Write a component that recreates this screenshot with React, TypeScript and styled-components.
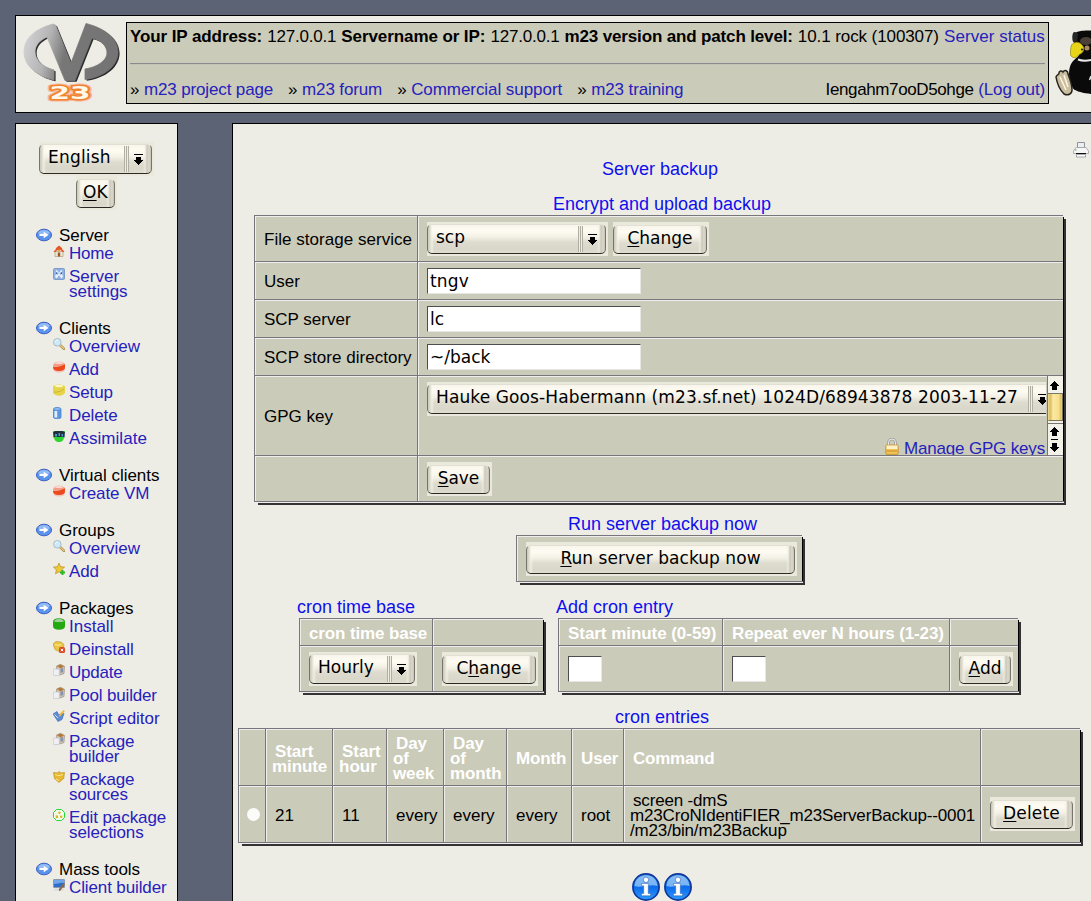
import React from 'react';
import styled, { createGlobalStyle, css } from 'styled-components';

const sans = '"Liberation Sans", Arial, sans-serif';
const ui = '"DejaVu Sans", Verdana, sans-serif';
const page = '#eeede5';
const panel = '#cbcbb9';
const dark = '#76767c';
const light = '#efeeec';
const link = '#2621bd';

const GlobalStyle = createGlobalStyle`
  html, body { margin: 0; padding: 0; background: #5b6374; overflow: hidden; }
  *, *::before, *::after { box-sizing: border-box; }
  body { font: 17px/15px ${sans}; color: #000; }
`;

const Page = styled.div`
  width: 100vw;
  height: 100vh;
  padding: 15px 0 0 15px;
  overflow: hidden;
`;

/* ---------- text ---------- */

const Text = styled.span<{ $track?: number; $bold?: boolean }>`
  white-space: nowrap;
  letter-spacing: ${(p) => p.$track ?? 0}px;
  font-weight: ${(p) => (p.$bold ? 700 : 400)};
`;

const Link = styled.a<{ $track?: number }>`
  color: ${link};
  text-decoration: none;
  letter-spacing: ${(p) => p.$track ?? 0}px;
`;

/* ---------- header ---------- */

const Header = styled.header`
  display: flex;
  width: 1110px;
  height: 98px;
  padding: 6px 0 0 7px;
  border: 1px solid #000;
  background: ${page};
`;

const InfoBox = styled.div`
  width: 923px;
  height: 82px;
  margin: 0 6px 0 6px;
  padding: 4px 3px 0;
  border: 1px solid #000;
  background: ${panel};
`;

const InfoRow = styled.div`
  display: flex;
  justify-content: space-between;
  height: 20px;
  line-height: 20px;
  white-space: nowrap;
`;

const Rule = styled.div`
  height: 2px;
  margin: 16px 0 15px;
  border-top: 1px solid #8b8b8f;
  border-bottom: 1px solid #c3c3b8;
`;

const Links = styled.div`
  display: flex;
  gap: 15px;
`;

const Bullet = styled.span`
  margin-right: 4.5px;
`;

/* ---------- controls ---------- */

const Frame = styled.div<{ $w: number; $kind: 'select' | 'button' }>`
  display: flex;
  flex: none;
  width: ${(p) => p.$w}px;
  height: 34px;
  padding: ${(p) => (p.$kind === 'select' ? 2 : 3)}px 2px 2px 0;
  background: #ebe8dc;
`;

const face = css`
  display: block;
  width: 100%;
  height: 100%;
  margin: 0;
  border: 1px solid #77746b;
  border-top-color: #e2dfd3;
  border-bottom-color: #2a2926;
  border-radius: 5px;
  background:
    linear-gradient(90deg, #c9c6ba 0, #dedbcf 2px, #fbf9ee99 4px, transparent 6px),
    linear-gradient(270deg, #c4c1b5 0, #dcd9cc 2px, #cbc8bb 4px, #f3f1e699 6px, transparent 8px),
    linear-gradient(180deg, #f8f6ec 0, #fefcf2 6px, #f3f1e6 12px, #dedbcf 17px, #d9d6ca 24px, #e0ddd1 100%);
  color: #000;
  font: 17px/24px ${ui};
  white-space: nowrap;
`;

const ButtonFace = styled.button<{ $track?: number }>`
  ${face}
  padding: 0 0 2px;
  line-height: 25px;
  text-align: center;
  letter-spacing: ${(p) => p.$track ?? 0}px;

  u {
    text-decoration-thickness: 1px;
    text-underline-offset: 2px;
    text-decoration-skip-ink: none;
  }
`;

const SelectFace = styled.div<{ $track?: number }>`
  ${face}
  display: flex;
  justify-content: space-between;
  padding: 0 8px;
  letter-spacing: ${(p) => p.$track ?? 0}px;
`;

const Grip = styled.span`
  display: flex;
  gap: 5px;
  padding-top: 1px;
`;

const Lines = styled.span`
  width: 5px;
  height: 26px;
  background: repeating-linear-gradient(90deg, #b0aea3 0 1px, #f0eee3 1px 2px);
`;

const Input = styled.div<{ $w: number; $track?: number }>`
  width: ${(p) => p.$w}px;
  height: 26px;
  padding-left: 2px;
  border: 1px solid #e6e6e4;
  border-top-color: #4d4d4d;
  border-left-color: #4d4d4d;
  background: #fff;
  font: 17px/24px ${ui};
  letter-spacing: ${(p) => p.$track ?? 0}px;
`;

const DropArrow = () => (
  <svg width="9" height="24" viewBox="0 0 9 24" shapeRendering="crispEdges">
    <path d="M0 8h9v1H0zM2 11h5v3h2v1H8v1H7v1H6v1H5v1H4v-1H3v-1H2v-1H1v-1H0v-1h2z" />
  </svg>
);

const Select = ({ w, track, children }: { w: number; track?: number; children: string }) => (
  <Frame $w={w} $kind="select">
    <SelectFace $track={track}>
      {children}
      <Grip>
        <Lines />
        <DropArrow />
      </Grip>
    </SelectFace>
  </Frame>
);

const Button = ({ w, track, children }: { w: number; track?: number; children: React.ReactNode }) => (
  <Frame $w={w} $kind="button">
    <ButtonFace $track={track}>{children}</ButtonFace>
  </Frame>
);

/* ---------- columns ---------- */

const Columns = styled.div`
  display: flex;
  align-items: flex-start;
  gap: 54px;
  margin-top: 10px;
`;

const Sidebar = styled.nav`
  flex: none;
  width: 163px;
  height: 800px;
  padding-top: 18px;
  border: 1px solid #000;
  background: ${page};
  overflow: hidden;
`;

const Language = styled.div`
  display: flex;
  flex-direction: column;
  align-items: center;
  margin: 0 0 18px;
`;

const Group = styled.section`
  padding-left: 20px;
  margin-bottom: 22px;
`;

const GroupTitle = styled.div`
  display: flex;
  gap: 7px;
  height: 18px;
  letter-spacing: -0.02px;
`;

const Item = styled.div`
  display: flex;
  gap: 4px;
  width: 139px;
  padding-left: 17px;

  & + & { margin-top: 8px; }
  svg { flex: none; margin-top: -1px; }
`;

const Main = styled.main`
  position: relative;
  flex: none;
  width: 900px;
  height: 800px;
  padding: 35px 0 0 5px;
  border: 1px solid #000;
  background: ${page};
`;

const PrintLink = styled.a`
  position: absolute;
  left: 840px;
  top: 17px;

  svg { display: block; }
`;

const Content = styled.div`
  display: flex;
  flex-direction: column;
  align-items: flex-start;
  width: 844px;
`;

const Caption = styled.h2<{ $centered?: boolean; $top?: number; $shift?: number }>`
  width: ${(p) => (p.$centered ? '844px' : 'auto')};
  height: 20px;
  margin: ${(p) => p.$top ?? 0}px 0 1px;
  padding-left: ${(p) => p.$shift ?? 0}px;
  color: #0f0fee;
  font: 18px/20px ${sans};
  text-align: ${(p) => (p.$centered ? 'center' : 'left')};
  white-space: nowrap;
`;

const Table = styled.div<{ $cols: string; $rows: string; $left?: number }>`
  display: grid;
  grid-template-columns: ${(p) => p.$cols};
  grid-template-rows: ${(p) => p.$rows};
  margin-left: ${(p) => p.$left ?? 0}px;
  padding: 0 1px 2px 0;
  background:
    linear-gradient(${light}, ${light}) 0 100% / 100% 1px no-repeat,
    linear-gradient(${dark}, ${dark}) 0 calc(100% - 1px) / 100% 1px no-repeat,
    linear-gradient(#000, #000) 100% 2px / 1px 100% no-repeat,
    ${page};
  box-shadow: 3px 3px 0 -1px #333;
`;

const Cell = styled.div<{ $head?: boolean; $wrap?: boolean; $middle?: boolean; $flush?: boolean; $drop?: number }>`
  display: flex;
  gap: 5px;
  min-width: 0;
  align-items: ${(p) => (p.$middle ? 'center' : 'flex-start')};
  padding: ${(p) => (p.$middle ? (p.$drop ?? 1) : 6 + (p.$drop ?? 0))}px 0 0 ${(p) => (p.$wrap ? 6 : 9)}px;
  ${(p) => p.$flush && 'padding: 0;'}
  border-top: 1px solid ${dark};
  border-left: 1px solid ${dark};
  background:
    linear-gradient(${light}, ${light}) 0 0 / 100% 1px no-repeat,
    linear-gradient(${light}, ${light}) 0 0 / 1px 100% no-repeat,
    ${panel};
  color: ${(p) => (p.$head ? '#fff' : '#000')};
  font-weight: ${(p) => (p.$head ? 700 : 400)};
  text-indent: ${(p) => (p.$wrap ? 3 : 0)}px;
`;

const Pair = styled.div`
  display: flex;
  gap: 12px;
  margin-left: 59px;
`;

const Pane = styled.div`
  width: 629px;
  height: 79px;
  padding: 6px 1px 0 9px;
  overflow: hidden;
`;

const KeyLink = styled.div`
  display: flex;
  justify-content: flex-end;
  gap: 5px;
  margin-top: 22px;
  line-height: 21px;
`;

const Scrollbar = styled.div`
  display: flex;
  flex-direction: column;
  width: 16px;
  height: 79px;
  margin-left: -4px;
  padding-top: 1px;
  border-left: 1px solid #77766f;
  background: #f3f1e8;
`;

const Thumb = styled.div`
  height: 28px;
  border: 1px solid #7b745c;
  border-left-color: #e8d48a;
  border-top: 0;
  background: linear-gradient(90deg, #e3c469 0 2px, #fbeaa4 4px, #f6df8b 10px, #d9b95c 12px, #f3dc88 100%);
`;

const Radio = styled.span`
  width: 13px;
  height: 13px;
  margin-left: -1px;
  border-radius: 50%;
  background: #fbfbf9;
`;

const Infos = styled.div`
  display: flex;
  gap: 4px;
  margin: 29px 0 0 394px;
`;

/* ---------- drawings ---------- */

const letterM =
  'M53 24C35 29 24 38 24 52c0 14 13 24 30 28V70C43 67 35 60 35 52c0-7 5-12 12-15l18 43.500h10L92 38c9 2 15 8 15 15 0 7-9 14-22 16v10.500C104 77 118 66 118 52 118 38 104 28 86 23.500L71 63 55.500 25z';

const Logo = () => (
  <svg width="97" height="82" viewBox="23 22 97 82">
    <defs>
      <linearGradient id="metal" x1="0" y1="0" x2="1" y2="0.15">
        <stop offset="0" stopColor="#d8d8da" />
        <stop offset="0.3" stopColor="#b4b4b5" />
        <stop offset="0.5" stopColor="#777" />
        <stop offset="1" stopColor="#747474" />
      </linearGradient>
    </defs>
    <path transform="translate(1.6 1.2)" fill="#2b2b2b" d={letterM} />
    <path fill="url(#metal)" stroke="url(#metal)" strokeWidth="0.8" d={letterM} />
    <g fontFamily="DejaVu Sans" fontWeight="700" fontSize="18" strokeLinejoin="round">
      <text x="49.500" y="99" textLength="41" lengthAdjust="spacingAndGlyphs" fill="none" stroke="#f6b9a0" strokeWidth="5">23</text>
      <text x="49.500" y="99" textLength="41" lengthAdjust="spacingAndGlyphs" fill="#fff8e8" stroke="#f0832f" strokeWidth="3" paintOrder="stroke">23</text>
    </g>
  </svg>
);

const Tux = () => (
  <svg width="54" height="82" viewBox="1055 22 54 82">
    <path d="M1074 34c3-3 8-3.500 14-3.500h20v64h-12c-9-1-19-2-23-6-4-7-5-15-3-22 2-6 6-8 9-11-5-5-6-14-5-21.500z" fill="#0a0a0b" />
    <path d="M1073 33c1-2 4-1 5 1l-1 7-4 1c-1-3-1-6 0-9z" fill="#262626" />
    <ellipse cx="1086" cy="41" rx="6" ry="4" fill="#4b4038" />
    <circle cx="1087" cy="48" r="2.500" fill="#b0895f" />
    <path d="M1071.500 45c3-4 9-4 12 2 1 4-1 6-5 8-2 3-6 4-8 0 0-4 0-7 1-10z" fill="#e6d419" stroke="#8f8410" strokeWidth="0.700" />
    <circle cx="1082" cy="49.500" r="1" fill="#111" />
    <path d="M1078 59.500c4 1.500 8 1.500 13 .5" stroke="#e9e9e9" strokeWidth="2" fill="none" />
    <path d="M1056 77c1-3 3-2 3-4s3-3 4-1c2-3 5-1 5 2 2 5 4 10 4 16 0 4-4 6-8 4-4-4-7-11-8-17z" fill="#c9bda0" stroke="#26231d" strokeWidth="1.500" />
    <path d="M1060 77l6 13M1064 75l4 12" stroke="#fff6e0" strokeWidth="1.500" />
    <path d="M1091 76l-1.500 4" stroke="#ddd" strokeWidth="1.500" />
  </svg>
);

const Arrow = () => (
  <svg width="16" height="14" viewBox="0 0 16 14">
    <ellipse cx="8" cy="7" rx="7.500" ry="5.800" fill="#5b93ec" stroke="#3a5fc4" />
    <ellipse cx="8" cy="4.800" rx="5.600" ry="2.800" fill="#a9cbf8" opacity="0.700" />
    <path d="M3.500 6h4.200V3.700l4.800 3.300-4.800 3.300V8H3.500z" fill="#fff" />
  </svg>
);

const shapes: Record<string, React.ReactNode> = {
  home: (
    <>
      <path d="M2 6.500h8V11.500H2z" fill="#eee6d4" stroke="#a89e90" strokeWidth="0.700" />
      <path d="M0.500 6.500L6 1l5.500 5.500-1.500.800L6 3.800 2 7.300z" fill="#e4572b" />
      <path d="M2.500 3.500L6 0.500l3.500 3-3.500 2z" fill="#e4572b" />
      <path d="M4.800 7.500h2.400v4H4.800z" fill="#a0561f" />
      <path d="M6 4.200l1.800 2H4.200z" fill="#f0a030" />
    </>
  ),
  settings: (
    <>
      <rect x="0.500" y="0.500" width="11" height="11" rx="1" fill="#8fb1e4" stroke="#7f9bc9" />
      <path d="M3 2.500l2 2-2 2M9 2.500l-2 2 2 2M3 10l3-4 3 4M2 8h2M8 8h2" stroke="#eef4fd" strokeWidth="1.300" fill="none" />
      <path d="M3 4.500h1.500V6H3zM7.500 4.500H9V6H7.500z" fill="#3a60a8" />
    </>
  ),
  search: (
    <>
      <path d="M7.500 7.500l3.800 3.500" stroke="#9d8450" strokeWidth="2.600" strokeLinecap="round" />
      <path d="M7.500 7.500l3.500 3.300" stroke="#eec878" strokeWidth="1.300" strokeLinecap="round" />
      <circle cx="4.300" cy="4.300" r="3.800" fill="#cdeaf6" stroke="#a9bccb" />
      <path d="M2.200 3.600c.5-1 1.300-1.500 2.400-1.500" stroke="#fff" fill="none" />
    </>
  ),
  red: (
    <>
      <path d="M0 5c0-3 2-4.500 6-4.500S12 2 12 5v2c0 3-2 4.500-6 4.500S0 10 0 7z" fill="#f3c0b2" />
      <path d="M0 6c4 .5 8-1 12-3v3.500c0 2-2 3.500-6 3.500S0 8.500 0 6z" fill="#ec4a1e" />
      <path d="M0 5.800V4.500C2 2 4 1.500 6 1.500s5 .5 6 1.500C9 4.500 4 6 0 5.800z" fill="#f29c86" />
      <path d="M2 2.800C3 1.600 4.500 1.200 6 1.200s3 .4 4 1.600z" fill="#fdeae4" />
    </>
  ),
  yellow: (
    <>
      <path d="M0 3c0-1.500 3-2.500 6-2.500s6 1 6 2.500v5c0 2-3 3.800-6 3.800S0 10 0 8z" fill="#e6d44a" />
      <ellipse cx="6" cy="2" rx="4" ry="1.200" fill="#fbf6c8" />
      <path d="M1 8c3 .5 7-.5 10-3" stroke="#c2a92a" fill="none" strokeWidth="0.700" />
    </>
  ),
  bin: (
    <>
      <path d="M.5 2c0-2 7.500-2 7.500 0v8.500c0 1.600-7.500 1.600-7.500 0z" fill="#5b98e4" stroke="#4577c2" strokeWidth="0.700" />
      <path d="M1.500 4h2.700v6.500H1.500z" fill="#e4f0fd" />
      <path d="M1 2c1-1.300 5-1.300 6.500 0-1.500 1-5 1-6.500 0z" fill="#8fbdf2" />
    </>
  ),
  assimilate: (
    <>
      <path d="M0 1h12l-.5 6.500H.5z" fill="#20303c" />
      <path d="M1 7h10c0 3-2 5-5 5S1 10 1 7z" fill="#2fd52f" />
      <path d="M2 4h2v2.500H2zM5.500 3h1.500v3H5.500zM8.500 4H10v2.500H8.500z" fill="#3f9fc8" />
      <path d="M0 1h1.500v1H0zM10.500 1H12v1h-1.500z" fill="#2fd52f" />
    </>
  ),
  star: (
    <>
      <path d="M6 0l1.600 3.700 4 .4-3 2.700.9 4L6 8.800l-3.500 2 .9-4-3-2.700 4-.4z" fill="#ecc83a" stroke="#b98c1c" strokeWidth="0.700" />
      <path d="M8.500 7h2v1.500H12v2h-1.500V12h-2v-1.500H7v-2h1.500z" fill="#2fb52a" />
    </>
  ),
  green: (
    <>
      <path d="M0 4c0-2.500 2-3.700 6-3.700S12 1.500 12 4v4c0 2.500-2 3.700-6 3.700S0 10.500 0 8z" fill="#25a913" />
      <path d="M1 3.500C2 1.500 4 1 6 1s4 .5 5 2.500c-3 .8-7 .8-10 0z" fill="#a3cf9c" />
    </>
  ),
  deinstall: (
    <>
      <path d="M0 3l3-2.500 5 .5 3 2.500-1 5-4 2-4-2z" fill="#ebc640" stroke="#b8942a" strokeWidth="0.600" />
      <path d="M2 3.500l3 .8 3-.8" stroke="#fbeea0" fill="none" />
      <rect x="6" y="6" width="6" height="6" rx="1.500" fill="#dd4a2c" />
      <path d="M7.800 7.800l2.400 2.400M10.200 7.800l-2.400 2.400" stroke="#fff" />
    </>
  ),
  box: (
    <>
      <path d="M3.500 2l4-1.700 4 2-.5 7.200-4 1.500-3-2z" fill="#cfc4b4" stroke="#8f8573" strokeWidth="0.600" />
      <path d="M4 2l3.500-1.500 3.500 2-3.500 2z" fill="#b67a35" />
      <path d="M7.500 4.800l2.500-.8V8l-2.500 1z" fill="#8490ac" />
      <rect x="0.300" y="5" width="6" height="6.500" rx="1" fill="#f0f0f4" stroke="#b9bcc8" strokeWidth="0.600" />
    </>
  ),
  script: (
    <>
      <path d="M0 4l4-2.500 1.500 3L11 3.500 9 9.500l-4 2z" fill="#5f8cd8" stroke="#3d62aa" strokeWidth="0.600" />
      <path d="M1.500 4.500L5 8" stroke="#cfe0f8" fill="none" />
      <path d="M10.500 0l1.300 1.300L7.500 6l-1.800.7.500-1.900z" fill="#f0b82e" />
    </>
  ),
  sources: (
    <>
      <path d="M0.500 1.500l4 .5L6 .5 8 2l3.500-.5-.8 6L6 11.500l-4.500-4z" fill="#e8b930" stroke="#b5861c" strokeWidth="0.600" />
      <path d="M2 3.500l4 1.200 4-1.200M3 8l3 1.500" stroke="#fbe790" fill="none" />
    </>
  ),
  selections: (
    <>
      <path d="M3.500.5h5l3 3v5l-3 3h-5l-3-3v-5z" fill="#f4fbe8" stroke="#22d83a" />
      <path d="M6 2.200l2 1-1.500 2.200L5 4zM2.500 6.500l2.300-.3.500 2.600-2.300.4zM7.200 6.500l2.300.3-.3 2.300-2.200-.3z" fill="#d9b62c" />
    </>
  ),
  client: (
    <>
      <rect x="0.500" y="0.500" width="11" height="8" rx="0.500" fill="#2f6fcb" stroke="#8a98ae" />
      <path d="M1 1h10v3C7 3 5 5 1 5z" fill="#6fa6ea" />
      <path d="M1.500 9.500h9l1 2H.5z" fill="#d9dce2" />
      <path d="M10.500 4l1.500 1-4.500 6.500-1.700.5.200-2z" fill="#8d6a45" />
    </>
  ),
};

const Glyph = ({ name }: { name: string }) => (
  <svg width="12" height="12" viewBox="0 0 12 12">{shapes[name]}</svg>
);

const Printer = () => (
  <svg width="16" height="17" viewBox="0 0 16 17">
    <path d="M4.500 1.500h7v5h-7z" fill="#eceef2" stroke="#8f9298" />
    <path d="M3 6.500h10l2.500 3.500v2.500H.5V10z" fill="#f6f6f7" stroke="#9da0a5" strokeWidth="0.800" />
    <path d="M3 12.500h10" stroke="#111" />
    <path d="M3.500 13.500h9v2.500h-9z" fill="#fff" stroke="#8f9298" strokeWidth="0.800" />
    <path d="M2 9h1.500" stroke="#3db83d" />
  </svg>
);

const Lock = () => (
  <svg width="14" height="17" viewBox="0 0 14 17">
    <path d="M3.500 8V4.500a3.500 3.500 0 0 1 7 0V8" fill="none" stroke="#9b9b98" strokeWidth="2.400" />
    <path d="M3.500 8V4.500a3.500 3.500 0 0 1 7 0V8" fill="none" stroke="#f0f0ee" strokeWidth="1" />
    <rect x="0.800" y="7" width="12.400" height="9.400" rx="1" fill="#efc458" stroke="#c58e28" strokeWidth="0.800" />
    <path d="M1.500 7.500h11v3.500h-11z" fill="#fbf0c8" />
    <path d="M1.500 13h11" stroke="#dc9e33" strokeWidth="1.500" />
  </svg>
);

const Info = () => (
  <svg width="28" height="28" viewBox="0 0 28 28">
    <defs>
      <linearGradient id="blue" x1="0" y1="0" x2="0" y2="1">
        <stop offset="0" stopColor="#3c8eea" />
        <stop offset="0.500" stopColor="#0c6cea" />
        <stop offset="1" stopColor="#2f9bff" />
      </linearGradient>
    </defs>
    <circle cx="14" cy="14" r="13.100" fill="url(#blue)" stroke="#10389a" strokeWidth="1.700" />
    <path d="M2.500 13C3 6 8 2.300 14 2.300S25 6 25.500 13c-7-2.500-16 2.500-23 0z" fill="#a5d2f8" opacity="0.700" />
    <circle cx="14" cy="6.800" r="2.700" fill="#fff" stroke="#2a5cb0" strokeWidth="0.600" />
    <path d="M9.500 10.500h6.800v10h2.200v2.300h-9v-2.300h2.200v-7.700H9.500z" fill="#fff" stroke="#2a5cb0" strokeWidth="0.500" />
  </svg>
);

const ScrollUp = () => (
  <svg width="15" height="17" viewBox="0 0 15 17" shapeRendering="crispEdges">
    <path d="M6 4h1v1h1v1h1v1h1v1h1v1H9v4H4V9H2V8h1V7h1V6h1V5h1z" />
    <path d="M0 16h15v1H0z" fill="#77766f" />
  </svg>
);

const ScrollEnds = () => (
  <svg width="15" height="34" viewBox="0 0 15 34" shapeRendering="crispEdges">
    <path d="M0 2h15v1H0z" fill="#77766f" />
    <path d="M6 6h1v1h1v1h1v1h1v1h1v1H9v4H4v-4H2v-1h1V9h1V8h1V7h1zM3 18h7v1H3zM4 22h5v4h2v1h-1v1H9v1H8v1H7v1H6v-1H5v-1H4v-1H3v-1H2v-1h2z" />
  </svg>
);

/* ---------- data ---------- */

type Entry = [icon: string, label: string, track?: number];

const menu: { title: string; items: Entry[] }[] = [
  { title: 'Server', items: [['home', 'Home', -0.2], ['settings', 'Server settings']] },
  {
    title: 'Clients',
    items: [['search', 'Overview', 0.02], ['red', 'Add', -0.15], ['yellow', 'Setup', -0.1], ['bin', 'Delete', -0.1], ['assimilate', 'Assimilate', 0.05]],
  },
  { title: 'Virtual clients', items: [['red', 'Create VM', -0.1]] },
  { title: 'Groups', items: [['search', 'Overview', 0.02], ['star', 'Add', -0.15]] },
  {
    title: 'Packages',
    items: [
      ['green', 'Install'],
      ['deinstall', 'Deinstall', -0.05],
      ['box', 'Update', -0.2],
      ['box', 'Pool builder', -0.16],
      ['script', 'Script editor'],
      ['box', 'Package builder', -0.1],
      ['sources', 'Package sources', -0.1],
      ['selections', 'Edit package selections', -0.1],
    ],
  },
  { title: 'Mass tools', items: [['client', 'Client builder', -0.12]] },
];

const cronHeads: [string[], number][] = [
  [[], 0],
  [['Start', 'minute'], -0.08],
  [['Start', 'hour'], 0],
  [['Day', 'of', 'week'], -0.1],
  [['Day', 'of', 'month'], -0.1],
  [['Month'], -0.15],
  [['User'], -0.15],
  [['Command'], -0.25],
  [[], 0],
];

const Wrapped = styled.span<{ $track?: number }>`
  letter-spacing: ${(p) => p.$track ?? 0}px;
  white-space: nowrap;
`;

const Lined = ({ lines, track }: { lines: string[]; track: number }) => (
  <Wrapped $track={track}>
    {lines.map((line, i) => (
      <React.Fragment key={line}>
        {i > 0 && <br />}
        {line}
      </React.Fragment>
    ))}
  </Wrapped>
);

const schedule = ['21', '11', 'every', 'every', 'every', 'root'];
const command = ['screen -dmS', 'm23CroNIdentiFIER_m23ServerBackup--0001', '/m23/bin/m23Backup'];

export default function App() {
  return (
    <Page>
      <GlobalStyle />
      <Header>
        <Logo />
        <InfoBox>
          <InfoRow>
            <Text $bold $track={-0.09}>Your IP address:</Text>
            <Text $track={-0.2}>127.0.0.1</Text>
            <Text $bold $track={-0.09}>Servername or IP:</Text>
            <Text $track={-0.2}>127.0.0.1</Text>
            <Text $bold $track={-0.15}>m23 version and patch level:</Text>
            <Text $track={-0.09}>10.1 rock (100307)</Text>
            <Link $track={0.06}>Server status</Link>
          </InfoRow>
          <Rule />
          <InfoRow>
            <Links>
              <span><Bullet>»</Bullet><Link $track={-0.14}>m23 project page</Link></span>
              <span><Bullet>»</Bullet><Link $track={-0.13}>m23 forum</Link></span>
              <span><Bullet>»</Bullet><Link $track={-0.06}>Commercial support</Link></span>
              <span><Bullet>»</Bullet><Link $track={-0.1}>m23 training</Link></span>
            </Links>
            <span>
              <Text $track={-0.38}>Iengahm7ooD5ohge</Text> <Link $track={-0.15}>(Log out)</Link>
            </span>
          </InfoRow>
        </InfoBox>
        <Tux />
      </Header>

      <Columns>
        <Sidebar>
          <Language>
            <Select w={115} track={0.2}>English</Select>
            <Button w={41} track={0.2}><u>O</u>K</Button>
          </Language>
          {menu.map((group) => (
            <Group key={group.title}>
              <GroupTitle><Arrow />{group.title}</GroupTitle>
              {group.items.map(([icon, label, track]) => (
                <Item key={label}>
                  <Glyph name={icon} />
                  <Link $track={track}>{label}</Link>
                </Item>
              ))}
            </Group>
          ))}
        </Sidebar>

        <Main>
          <PrintLink><Printer /></PrintLink>
          <Content>
            <Caption $centered>Server backup</Caption>

            <Caption $centered $top={14} $shift={4}>Encrypt and upload backup</Caption>
            <Table $left={16} $cols="163px 646px" $rows="46px 38px 38px 38px 80px 46px">
              <Cell $middle><Text $track={0.03}>File storage service</Text></Cell>
              <Cell>
                <Select w={181}>scp</Select>
                <Button w={96}><u>C</u>hange</Button>
              </Cell>
              <Cell $middle>User</Cell>
              <Cell><Input $w={214} $track={0.15}>tngv</Input></Cell>
              <Cell $middle>SCP server</Cell>
              <Cell><Input $w={214}>lc</Input></Cell>
              <Cell $middle><Text $track={0.03}>SCP store directory</Text></Cell>
              <Cell><Input $w={214}>~/back</Input></Cell>
              <Cell $middle>GPG key</Cell>
              <Cell $flush>
                <Pane>
                  <Select w={631} track={0.117}>Hauke Goos-Habermann (m23.sf.net) 1024D/68943878 2003-11-27</Select>
                  <KeyLink><Lock /><Link $track={-0.17}>Manage GPG keys</Link></KeyLink>
                </Pane>
                <Scrollbar>
                  <ScrollUp />
                  <Thumb />
                  <ScrollEnds />
                </Scrollbar>
              </Cell>
              <Cell />
              <Cell><Button w={65} track={-0.1}><u>S</u>ave</Button></Cell>
            </Table>

            <Caption $centered $top={11} $shift={5}>Run server backup now</Caption>
            <Table $left={278} $cols="286px" $rows="46px">
              <Cell><Button w={271} track={0.05}><u>R</u>un server backup now</Button></Cell>
            </Table>

            <Pair>
              <div>
                <Caption $top={14}>cron time base</Caption>
                <Table $left={2} $cols="133px 111px" $rows="27px 46px">
                  <Cell $head $middle $drop={2}><Text $bold $track={-0.13}>cron time base</Text></Cell>
                  <Cell $head />
                  <Cell><Select w={108}>Hourly</Select></Cell>
                  <Cell><Button w={96}>C<u>h</u>ange</Button></Cell>
                </Table>
              </div>
              <div>
                <Caption $top={14}>Add cron entry</Caption>
                <Table $left={2} $cols="164px 227px 69px" $rows="27px 46px">
                  <Cell $head $middle $drop={2}><Text $bold $track={-0.05}>Start minute (0-59)</Text></Cell>
                  <Cell $head $middle $drop={2}><Text $bold $track={-0.14}>Repeat ever N hours (1-23)</Text></Cell>
                  <Cell $head />
                  <Cell $drop={4}><Input $w={34} /></Cell>
                  <Cell $drop={4}><Input $w={34} /></Cell>
                  <Cell><Button w={54}><u>A</u>dd</Button></Cell>
                </Table>
              </div>
            </Pair>

            <Caption $centered $top={14} $shift={4}>cron entries</Caption>
            <Table $cols="27px 67px 54px 57px 63px 65px 52px 357px 100px" $rows="57px 57px">
              {cronHeads.map(([lines, track], i) => (
                <Cell key={i} $head $middle $wrap $drop={3}>
                  <Lined lines={lines} track={track} />
                </Cell>
              ))}
              <Cell $middle $drop={0}><Radio /></Cell>
              {schedule.map((value, i) => (
                <Cell key={i} $middle $wrap $drop={2}>{value}</Cell>
              ))}
              <Cell $middle $wrap $drop={2}><Lined lines={command} track={-0.167} /></Cell>
              <Cell $middle $drop={0}><Button w={85} track={0.15}><u>D</u>elete</Button></Cell>
            </Table>

            <Infos><Info /><Info /></Infos>
          </Content>
        </Main>
      </Columns>
    </Page>
  );
}
